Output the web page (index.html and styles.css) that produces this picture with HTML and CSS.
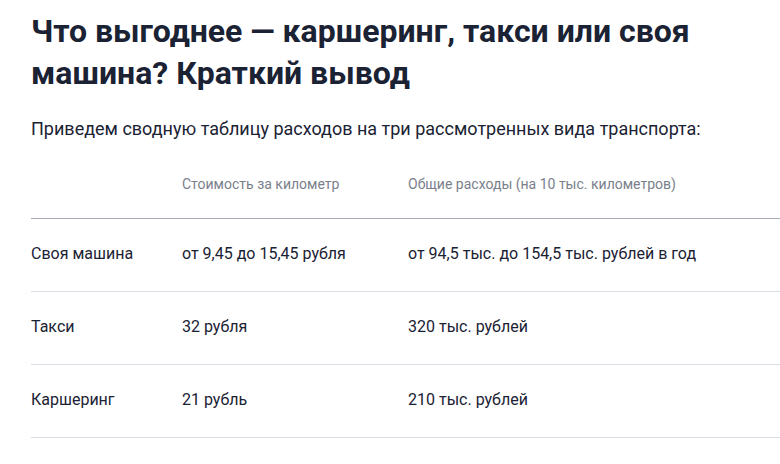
FILE: index.html
```html
<!DOCTYPE html>
<html lang="ru">
<head>
<meta charset="utf-8">
<link rel="stylesheet" href="styles.css">
</head>
<body>
<main class="article">
  <h2 class="title">Что выгоднее — каршеринг, такси или своя машина? Краткий вывод</h2>
  <p class="lead">Приведем сводную таблицу расходов на три рассмотренных вида транспорта:</p>
  <table class="costs">
    <thead>
      <tr>
        <th class="c1"></th>
        <th class="c2">Стоимость за километр</th>
        <th class="c3">Общие расходы (на 10 тыс. километров)</th>
      </tr>
    </thead>
    <tbody>
      <tr>
        <td>Своя машина</td>
        <td>от 9,45 до 15,45 рубля</td>
        <td>от 94,5 тыс. до 154,5 тыс. рублей в год</td>
      </tr>
      <tr>
        <td>Такси</td>
        <td>32 рубля</td>
        <td>320 тыс. рублей</td>
      </tr>
      <tr>
        <td>Каршеринг</td>
        <td>21 рубль</td>
        <td>210 тыс. рублей</td>
      </tr>
    </tbody>
  </table>
</main>
</body>
</html>
```
FILE: styles.css
```css
html, body {
  margin: 0;
  padding: 0;
  background: #ffffff;
  overflow: hidden;
}
body {
  font-family: Roboto, "Noto Sans", sans-serif;
  color: #1a2233;
}
.article {
  padding: 10px 0 0 31px;
}
.title {
  margin: 0;
  font-size: 32px;
  line-height: 42px;
  font-weight: 700;
  color: #1a2233;
  width: 700px;
}
.lead {
  margin: 22px 0 0;
  font-size: 18px;
  line-height: 26px;
}
.costs {
  margin-top: 24px;
  border-collapse: collapse;
  width: 900px;
  table-layout: fixed;
}
.costs th {
  font-weight: 400;
  font-size: 14px;
  line-height: 20px;
  color: #7a7f8c;
  text-align: left;
  padding: 8px 0 24px;
  border-bottom: 1px solid #a9abbb;
}
.costs .c1 { width: 151px; }
.costs .c2 { width: 226px; }
.costs td {
  font-size: 16px;
  line-height: 20px;
  padding: 25px 0 27px;
  border-bottom: 1px solid #dcdce4;
  vertical-align: middle;
}
```
